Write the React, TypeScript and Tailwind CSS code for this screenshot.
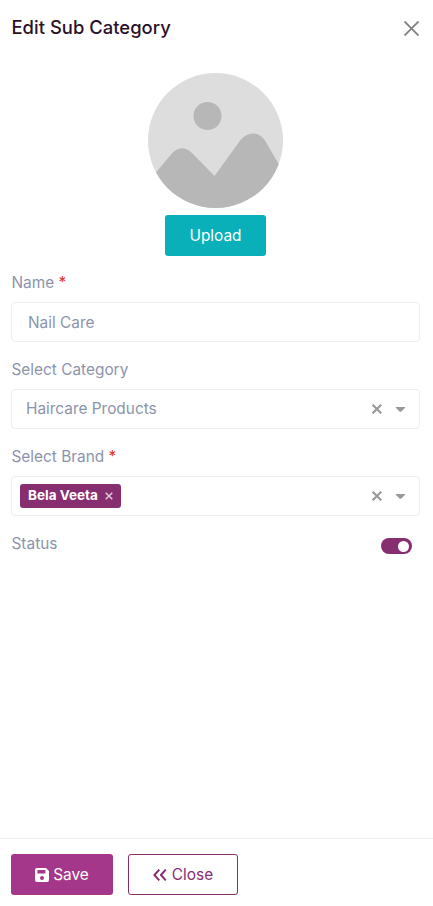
import React, { useState } from "react";

function FieldLabel({ children, required }: { children: React.ReactNode; required?: boolean }) {
  return (
    <label className="block h-[26px] pl-[0.5px] leading-[26px]">
      {children} {required && <span className="text-[#dc3220]">*</span>}
    </label>
  );
}

function SelectIndicators() {
  return (
    <div className="flex items-center">
      <button type="button" aria-label="Clear" className="mr-[13px]">
        <svg width="11" height="10" viewBox="0 0 11 10" className="block">
          <path d="M1.6 0.7 10.2 9.3M10.2 0.7 1.6 9.3" stroke="#999" strokeWidth="2.1" fill="none" />
        </svg>
      </button>
      <svg width="10" height="5" viewBox="0 0 10 5" className="mt-px block overflow-visible">
        <path d="M1 0h8.8Q10.500 0.300 10 0.700L6.500 4.500Q5.500 5.200 4.500 4.500L0.800 0.700Q0.400 0.300 1 0z" fill="#999" />
      </svg>
    </div>
  );
}

function PlaceholderImage() {
  return (
    <svg width="135" height="135" viewBox="0 0 135 135" className="block rounded-full">
      <rect width="135" height="135" fill="#dddddd" />
      <circle cx="59.5" cy="43" r="14" fill="#b7b7b7" />
      <path
        d="M0 109 23 81.5Q33 70 44 80L66.5 103 92.5 67Q98 60.5 105 60.5Q112 60.5 117 67.5L140 107V135H0Z"
        fill="#b7b7b7"
      />
    </svg>
  );
}

function SaveIcon() {
  return (
    <svg width="14" height="14" viewBox="0 0 14 14" className="mr-1 block">
      <path
        fill="currentColor"
        fillRule="evenodd"
        d="M2 0h9l3 3v9a2 2 0 0 1-2 2H2a2 2 0 0 1-2-2V2a2 2 0 0 1 2-2zM2.4 2v3.4h8V2zM7 8a2 2 0 1 0 0 4 2 2 0 0 0 0-4z"
      />
    </svg>
  );
}

function ChevronsIcon() {
  return (
    <svg width="14" height="12" viewBox="0 0 14 12" className="mr-[5px] block">
      <path
        d="M6.3 0.6 1.4 6l4.9 5.4M12.8 0.6 7.9 6l4.9 5.4"
        stroke="currentColor"
        strokeWidth="1.9"
        strokeLinejoin="round"
        fill="none"
      />
    </svg>
  );
}

export default function EditSubCategory() {
  const [active, setActive] = useState(true);

  return (
    <div className="flex h-[906px] w-full flex-col bg-white font-['Inter',sans-serif] text-[15.4px] text-[#8c94ab]">
      {/* Header */}
      <header className="flex h-[56px] items-center justify-between pl-[11.5px] pr-[14px]">
        <h5 className="pb-0.5 text-[18.4px] font-medium leading-6 tracking-[0.03px] text-[#2b1029]">Edit Sub Category</h5>
        <button type="button" aria-label="Close panel">
          <svg width="15" height="15" viewBox="0 0 15 15" className="block">
            <path d="M0.5 0.5 14.5 14.5M14.5 0.5 0.5 14.5" stroke="#7f7f7f" strokeWidth="1.8" fill="none" />
          </svg>
        </button>
      </header>

      <form className="flex-1 pl-[11px] pr-[13px] pt-[17px]">
        <div className="flex flex-col items-center">
          <PlaceholderImage />
          <button type="button" className="mt-[7px] h-[41px] w-[101px] rounded-[3px] bg-[#0ab0b9] text-white">
            Upload
          </button>
        </div>

        <div className="mt-[14px]">
          <FieldLabel required>Name</FieldLabel>
          <div className="mt-1.5 h-10 rounded border border-[#eeeeee] px-4 leading-10">Nail Care</div>
        </div>

        <div className="mt-[15px]">
          <FieldLabel>Select Category</FieldLabel>
          <div className="mt-1.5 flex h-10 items-center justify-between rounded border border-[#eeeeee] px-[14px]">
            <span>Haircare Products</span>
            <SelectIndicators />
          </div>
        </div>

        <div className="mt-[15px]">
          <FieldLabel required>Select Brand</FieldLabel>
          <div className="mt-1.5 flex h-10 items-center justify-between rounded border border-[#eeeeee] pl-2 pr-[14px]">
            <span className="flex h-6 w-[101px] items-center justify-between rounded-[3px] bg-[#862e70] px-2 text-[13.5px] font-bold text-white">
              <span className="pb-0.5">Bela Veeta</span>
              <svg width="8" height="8" viewBox="0 0 8 8" className="block">
                <path d="M0.7 0.7 7.3 7.3M7.3 0.7 0.7 7.3" stroke="#dcc4d6" strokeWidth="1.6" fill="none" />
              </svg>
            </span>
            <SelectIndicators />
          </div>
        </div>

        <div className="mt-[15px] flex items-start justify-between pr-2">
          <FieldLabel>Status</FieldLabel>
          <button
            type="button"
            role="switch"
            aria-checked={active}
            aria-label="Status"
            onClick={() => setActive(!active)}
            className={
              active
                ? "mt-[7px] flex h-4 w-[31px] items-center justify-end rounded-full bg-[#862e70] px-[3px]"
                : "mt-[7px] flex h-4 w-[31px] items-center justify-start rounded-full bg-[#cccccc] px-[3px]"
            }
          >
            <span className="size-[11px] rounded-full bg-white" />
          </button>
        </div>
      </form>

      {/* Footer */}
      <footer className="flex h-[68px] gap-[15px] border-t border-[#eeeeee] pl-[11px] pt-[15px]">
        <button type="button" className="flex h-[41px] w-[102px] items-center justify-center rounded-[3px] bg-[#a5378a] text-white">
          <SaveIcon />
          Save
        </button>
        <button
          type="button"
          className="flex h-[41px] w-[110px] items-center justify-center rounded-[3px] border border-[#862e70] text-[#862e70]"
        >
          <ChevronsIcon />
          Close
        </button>
      </footer>
    </div>
  );
}
